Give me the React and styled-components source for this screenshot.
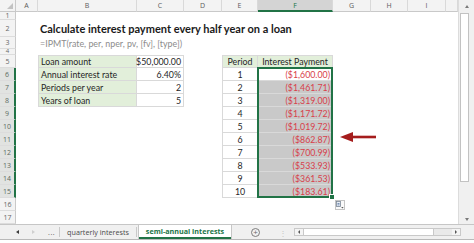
import React from "react";
import styled, { createGlobalStyle } from "styled-components";

const GlobalStyle = createGlobalStyle`
  html, body {
    margin: 0;
    padding: 0;
    background: #ffffff;
  }
  body {
    font-family: Lato, "Liberation Sans", sans-serif;
  }
`;

const GREEN = "#217346";

const Frame = styled.div`
  width: 474px;
  height: 243px;
  display: flex;
  flex-direction: column;
  overflow: hidden;
  background: #ffffff;
`;

const Main = styled.div`
  display: flex;
  height: 224px;
`;

const Sheet = styled.div`
  display: grid;
  grid-template-columns: 16px 22px 99px 47px 38px 36px 75px 38px 37px 38px 12px;
  grid-template-rows: 12px 8px 17px 12px 6px repeat(13, 13px);
  width: 458px;
  background: #ffffff;
`;

const Corner = styled.div`
  grid-row: 1;
  grid-column: 1;
  background: #f3f3f3;
  border-right: 1px solid #c9c9c9;
  border-bottom: 1px solid #c9c9c9;
  display: flex;
  align-items: flex-end;
  justify-content: flex-end;
  padding: 0 2px 2px 0;
  box-sizing: border-box;

  &::after {
    content: "";
    width: 0;
    height: 0;
    border-left: 6px solid transparent;
    border-bottom: 6px solid #c2c2c2;
  }
`;

const ColHead = styled.div`
  grid-row: 1;
  grid-column: ${(p) => p.$col};
  display: flex;
  align-items: center;
  justify-content: center;
  box-sizing: border-box;
  background: ${(p) => (p.$active ? "#d4d4d4" : "#f3f3f3")};
  border-right: 1px solid #d9d9d9;
  border-bottom: ${(p) => (p.$active ? `2px solid ${GREEN}` : "1px solid #c9c9c9")};
  color: ${(p) => (p.$active ? GREEN : "#5c5c5c")};
  font-family: "Open Sans", sans-serif;
  font-size: 7px;
  line-height: 1;
`;

const RowHead = styled.div`
  grid-column: 1;
  grid-row: ${(p) => p.$row};
  display: flex;
  align-items: center;
  justify-content: center;
  box-sizing: border-box;
  background: ${(p) => (p.$sel ? "#e1e3e1" : "#f3f3f3")};
  border-right: ${(p) => (p.$sel ? `2px solid ${GREEN}` : "1px solid #c9c9c9")};
  border-bottom: 1px solid #dcdcdc;
  color: ${(p) => (p.$sel ? "#5b6b5f" : "#666666")};
  font-family: "Open Sans", sans-serif;
  font-size: ${(p) => (p.$short ? 6 : 7)}px;
  line-height: ${(p) => (p.$short ? "5px" : 1)};
`;

const Title = styled.div`
  grid-row: 3;
  grid-column: 3 / 11;
  align-self: center;
  padding-left: 2px;
  font-weight: 700;
  font-size: 11px;
  color: #1a1a1a;
  white-space: nowrap;
`;

const Formula = styled.div`
  grid-row: 4;
  grid-column: 3 / 8;
  align-self: center;
  padding-left: 2px;
  font-size: 8.9px;
  color: #8c8c8c;
  white-space: nowrap;
`;

const Cell = styled.div`
  grid-row: ${(p) => p.$row};
  grid-column: ${(p) => p.$col};
  display: flex;
  align-items: center;
  justify-content: ${(p) =>
    p.$align === "right" ? "flex-end" : p.$align === "center" ? "center" : "flex-start"};
  box-sizing: border-box;
  padding: 0 2px;
  background: ${(p) =>
    p.$fill === "green" ? "#e2efda" : p.$fill === "grey" ? "#c9c9c9" : "#ffffff"};
  border-right: 1px solid #d9d9d9;
  border-bottom: 1px solid #d9d9d9;
  border-top: ${(p) => (p.$top ? "1px solid #d9d9d9" : "none")};
  border-left: ${(p) => (p.$left ? "1px solid #d9d9d9" : "none")};
  color: ${(p) => (p.$red ? "#d8404a" : "#262626")};
  font-size: 8.8px;
  white-space: nowrap;
`;

const Selection = styled.div`
  grid-column: 7;
  grid-row: 7 / 17;
  box-sizing: border-box;
  border: 2px solid ${GREEN};
  margin: -1px 0 0 -1px;
  position: relative;
  z-index: 2;
  pointer-events: none;
`;

const FillHandle = styled.div`
  position: absolute;
  right: -4px;
  bottom: -4px;
  width: 4px;
  height: 4px;
  background: ${GREEN};
  border: 1px solid #ffffff;
`;

const ArrowSlot = styled.div`
  grid-column: 7 / 10;
  grid-row: 11 / 13;
  display: flex;
  align-items: center;
  padding: 8px 0 0 82px;
  z-index: 3;
`;

const PasteSlot = styled.div`
  grid-column: 8;
  grid-row: 17;
  display: flex;
  align-items: center;
  padding-left: 2px;
`;

const PasteBox = styled.div`
  width: 10px;
  height: 10px;
  box-sizing: border-box;
  border: 1px solid #c4c4c4;
  background: #fafafa;
  display: flex;
  align-items: center;
  justify-content: center;
`;

const VScroll = styled.div`
  width: 16px;
  height: 224px;
  display: flex;
  flex-direction: column;
  background: #f0f0f0;
  border-left: 1px solid #dcdcdc;
  box-sizing: border-box;
`;

const ScrollBtn = styled.div`
  height: ${(p) => p.$h}px;
  display: flex;
  align-items: center;
  justify-content: center;

  &::after {
    content: "";
    width: 0;
    height: 0;
    border-left: 2px solid transparent;
    border-right: 2px solid transparent;
    ${(p) => (p.$dir === "up" ? "border-bottom: 3px solid #7a7a7a;" : "border-top: 3px solid #7a7a7a;")}
  }
`;

const VThumb = styled.div`
  width: 9px;
  height: 169px;
  margin: 1px 0 0 1px;
  box-sizing: border-box;
  background: #ffffff;
  border: 1px solid #c2c2c2;
`;

const Spacer = styled.div`
  flex: 1;
`;

const TabBar = styled.div`
  display: flex;
  align-items: stretch;
  height: 16px;
  box-sizing: border-box;
  background: #f0f0f0;
  border-top: 1px solid #c6c6c6;
  border-bottom: 1px solid #b9b9b9;
  font-family: "Open Sans", sans-serif;
  font-size: 7.2px;
  color: #444444;
`;

const Nav = styled.div`
  width: 59px;
  display: flex;
  align-items: center;
`;

const NavArrow = styled.div`
  margin-left: ${(p) => p.$ml}px;
  width: 0;
  height: 0;
  border-top: 2px solid transparent;
  border-bottom: 2px solid transparent;
  ${(p) =>
    p.$dir === "left"
      ? `border-right: 3px solid ${p.$faint ? "#cfcfcf" : "#3a3a3a"};`
      : `border-left: 3px solid ${p.$faint ? "#cfcfcf" : "#3a3a3a"};`}
`;

const Ellipsis = styled.span`
  margin-left: 13px;
  color: #555555;
  letter-spacing: 0.5px;
`;

const Sep = styled.div`
  width: 1px;
  margin: 2px 0;
  background: #c9c9c9;
`;

const Tab = styled.div`
  width: ${(p) => p.$w}px;
  display: flex;
  align-items: center;
  justify-content: center;
  box-sizing: border-box;
  margin-left: ${(p) => (p.$active ? 2 : 0)}px;
  background: ${(p) => (p.$active ? "#ffffff" : "transparent")};
  color: ${(p) => (p.$active ? GREEN : "#4a4a4a")};
  font-weight: ${(p) => (p.$active ? 700 : 400)};
  border-bottom: ${(p) => (p.$active ? `2px solid ${GREEN}` : "none")};
  box-shadow: ${(p) => (p.$active ? "1px 0 0 #c6c6c6, -1px 0 0 #c6c6c6" : "none")};
  white-space: nowrap;
`;

const AddBtn = styled.div`
  margin: auto 0 auto 20px;
  width: 9px;
  height: 9px;
  box-sizing: border-box;
  border: 1px solid #7d7d7d;
  border-radius: 50%;
  display: flex;
  align-items: center;
  justify-content: center;
  color: #6a6a6a;
  font-size: 8px;
  line-height: 1;
`;

const Dots = styled.div`
  margin-left: 19px;
  display: flex;
  align-items: center;
  color: #c4c4c4;
  font-size: 8px;
`;

const HScroll = styled.div`
  margin: 3px 0 3px 7px;
  width: 167px;
  display: flex;
  align-items: stretch;
  box-sizing: border-box;
  border: 1px solid #c9c9c9;
  background: #e9e9e9;
`;

const HBtn = styled.div`
  width: 8px;
  display: flex;
  align-items: center;
  justify-content: center;
  background: #f4f4f4;

  &::after {
    content: "";
    width: 0;
    height: 0;
    border-top: 2px solid transparent;
    border-bottom: 2px solid transparent;
    ${(p) => (p.$dir === "left" ? "border-right: 2px solid #555;" : "border-left: 2px solid #555;")}
  }
`;

const HThumb = styled.div`
  width: 131px;
  box-sizing: border-box;
  background: #ffffff;
  border-left: 1px solid #c9c9c9;
  border-right: 1px solid #c9c9c9;
`;

const columns = ["A", "B", "C", "D", "E", "F", "G", "H", "I", ""];

const loanRows = [
  ["Loan amount", "$50,000.00"],
  ["Annual interest rate", "6.40%"],
  ["Periods per year", "2"],
  ["Years of loan", "5"],
];

const payments = [
  "($1,600.00)",
  "($1,461.71)",
  "($1,319.00)",
  "($1,171.72)",
  "($1,019.72)",
  "($862.87)",
  "($700.99)",
  "($533.93)",
  "($361.53)",
  "($183.61)",
];

const rowNums = Array.from({ length: 17 }, (_, i) => i + 1);

function ArrowIcon() {
  return (
    <svg width="38" height="12" viewBox="0 0 38 12">
      <polygon points="0,6 13,1 13,11" fill="#a51d1d" />
      <rect x="12" y="4.7" width="24" height="2.6" fill="#a51d1d" />
    </svg>
  );
}

function PasteIcon() {
  return (
    <PasteBox>
      <svg width="8" height="8" viewBox="0 0 8 8">
        <rect x="0.5" y="0.5" width="4" height="5" fill="#e8eef6" stroke="#7b8796" strokeWidth="0.8" />
        <rect x="1.5" y="2" width="2" height="0.8" fill="#5d7aa6" />
        <rect x="1.5" y="3.5" width="2" height="0.8" fill="#5d7aa6" />
        <polygon points="5.2,6 7.6,6 6.4,7.4" fill="#555" />
      </svg>
    </PasteBox>
  );
}

export default function App() {
  return (
    <Frame>
      <GlobalStyle />
      <Main>
        <Sheet>
          <Corner />
          {columns.map((c, i) => (
            <ColHead key={i} $col={i + 2} $active={c === "F"}>
              {c}
            </ColHead>
          ))}
          {rowNums.map((n) => (
            <RowHead key={n} $row={n + 1} $sel={n >= 6 && n <= 15} $short={n === 4}>
              {n}
            </RowHead>
          ))}

          <Title>Calculate interest payment every half year on a loan</Title>
          <Formula>=IPMT(rate, per, nper, pv, [fv], [type])</Formula>

          {loanRows.map(([label, value], i) => (
            <React.Fragment key={label}>
              <Cell $row={i + 6} $col={3} $fill="green" $left $top={i === 0}>
                {label}
              </Cell>
              <Cell $row={i + 6} $col={4} $align="right" $top={i === 0}>
                {value}
              </Cell>
            </React.Fragment>
          ))}

          <Cell $row={6} $col={6} $fill="green" $align="center" $left $top>
            Period
          </Cell>
          <Cell $row={6} $col={7} $fill="green" $align="center" $top>
            Interest Payment
          </Cell>
          {payments.map((amount, i) => (
            <React.Fragment key={amount}>
              <Cell $row={i + 7} $col={6} $align="center" $left>
                {i + 1}
              </Cell>
              <Cell $row={i + 7} $col={7} $align="right" $red $fill={i === 0 ? undefined : "grey"}>
                {amount}
              </Cell>
            </React.Fragment>
          ))}

          <Selection>
            <FillHandle />
          </Selection>
          <ArrowSlot>
            <ArrowIcon />
          </ArrowSlot>
          <PasteSlot>
            <PasteIcon />
          </PasteSlot>
        </Sheet>
        <VScroll>
          <ScrollBtn $h={12} $dir="up" />
          <VThumb />
          <Spacer />
          <ScrollBtn $h={10} $dir="down" />
        </VScroll>
      </Main>
      <TabBar>
        <Nav>
          <NavArrow $dir="left" $ml={16} />
          <NavArrow $dir="right" $ml={13} $faint />
          <Ellipsis>...</Ellipsis>
        </Nav>
        <Sep />
        <Tab $w={76}>quarterly interests</Tab>
        <Sep />
        <Tab $w={92} $active>
          semi-annual interests
        </Tab>
        <AddBtn>+</AddBtn>
        <Dots>⋮</Dots>
        <HScroll>
          <HBtn $dir="left" />
          <HThumb />
          <Spacer />
          <HBtn $dir="right" />
        </HScroll>
      </TabBar>
    </Frame>
  );
}
